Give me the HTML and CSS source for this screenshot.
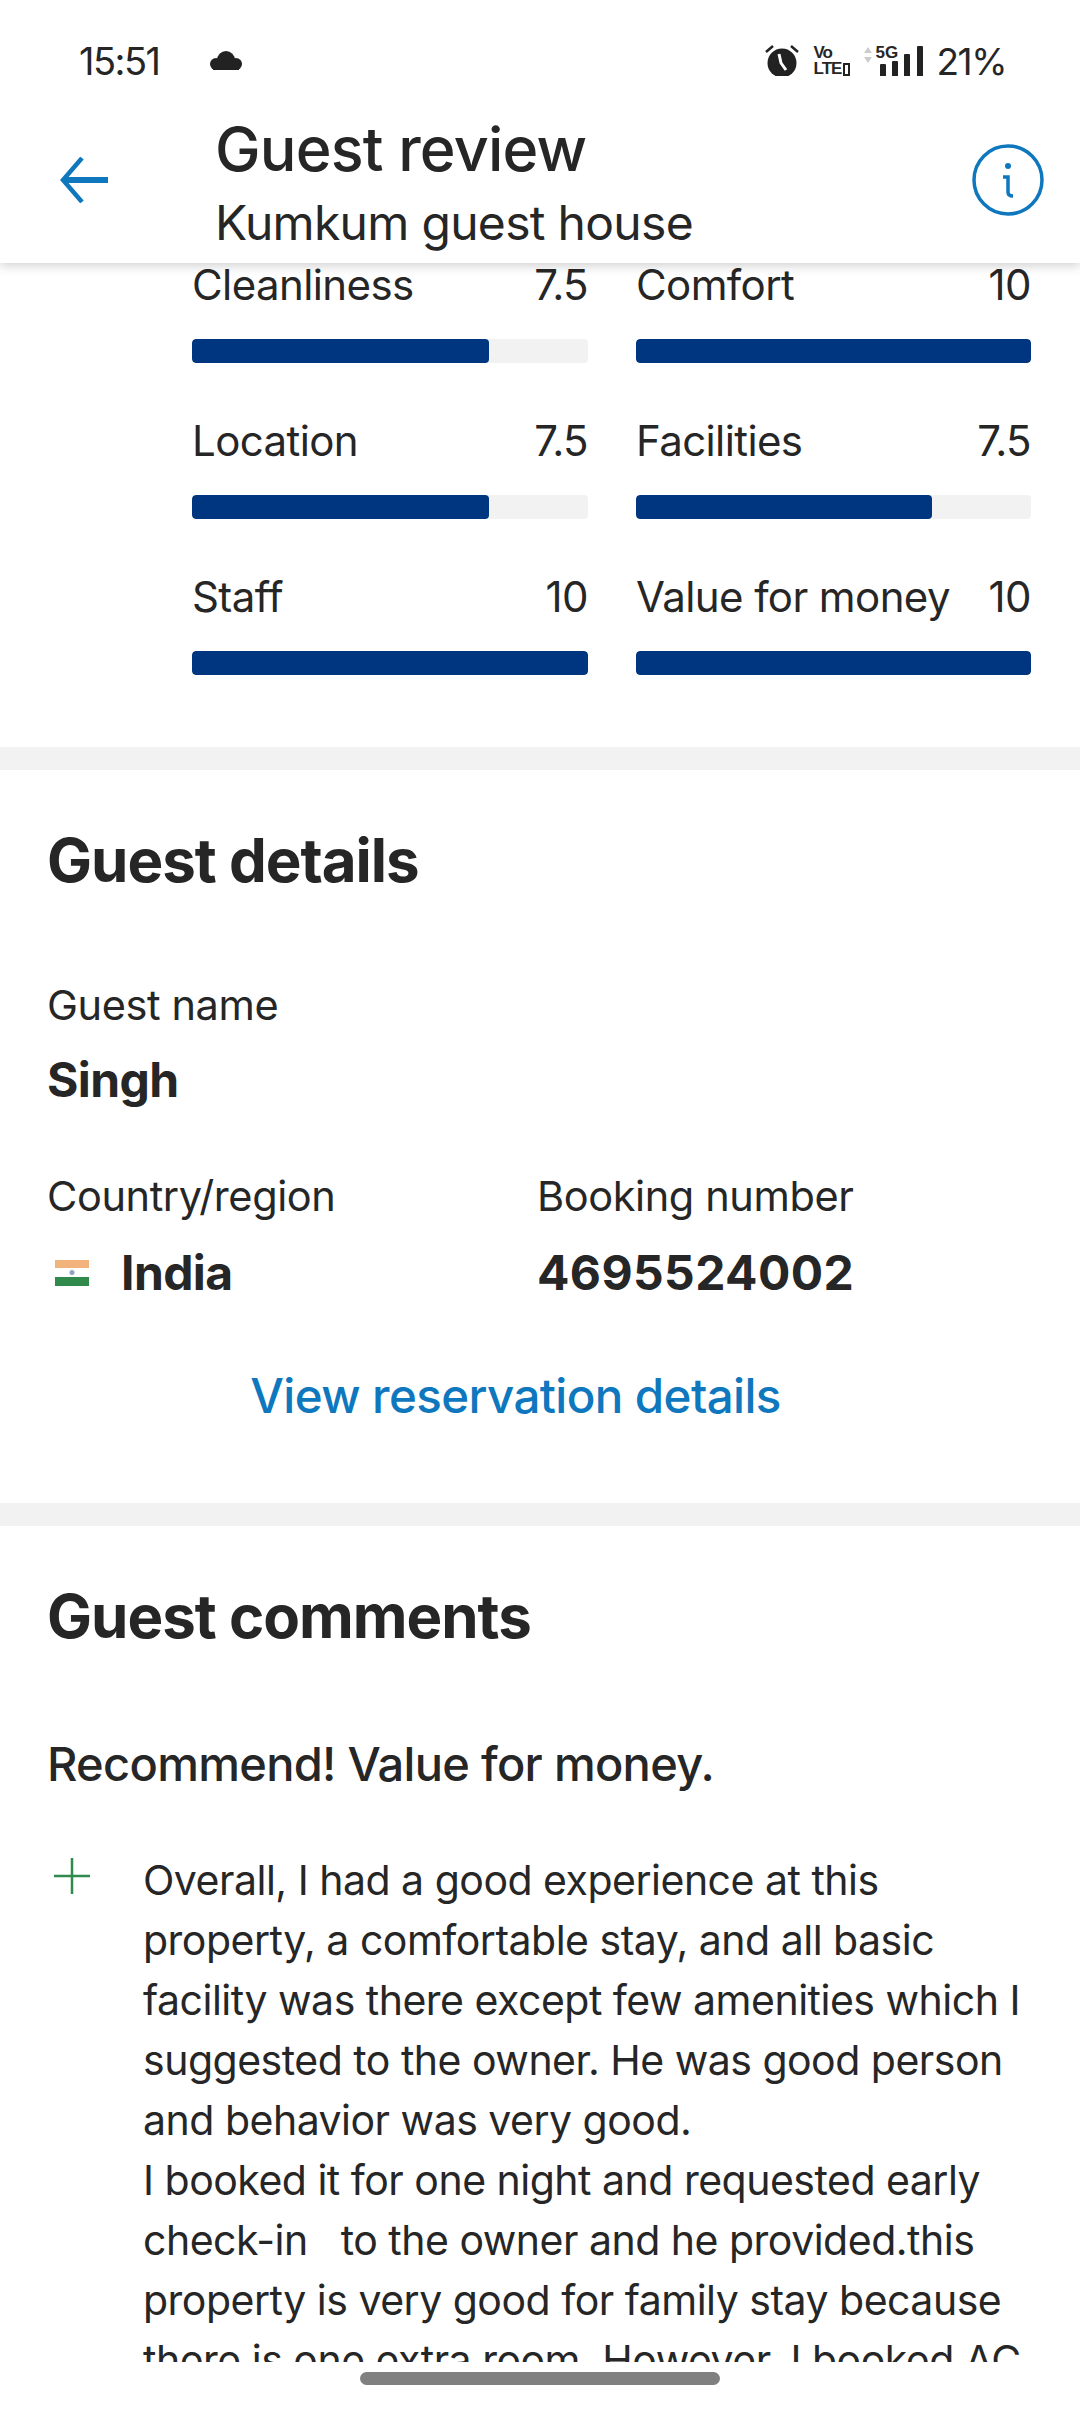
FILE: index.html
```html
<!doctype html>
<html lang="en">
    <head>
        <meta charset="UTF-8" />
        <meta name="viewport" content="width=device-width, initial-scale=1.0" />
        <title>Guest review</title>
        <link rel="stylesheet" href="styles.css">
    </head>
    <body>
        <div class="status-bar">
            <div class="status-left">
                <span class="time">15:51</span>
                <svg class="cloud" viewBox="0 0 34 20">
                    <circle cx="17" cy="9" r="9" fill="#222"/>
                    <circle cx="7" cy="13" r="6" fill="#222"/>
                    <circle cx="27" cy="13" r="6" fill="#222"/>
                    <rect x="4" y="13" width="26" height="6" fill="#222"/>
                </svg>
            </div>
            <div class="status-right">
                <svg class="alarm" viewBox="0 0 34 34">
                    <circle cx="17" cy="19" r="14.5" fill="#222"/>
                    <path d="M1 8l7-6M33 8l-7-6" stroke="#222" stroke-width="2.5" fill="none"/>
                    <path d="M14 10l2 9 5 7" stroke="#fff" stroke-width="3" fill="none"/>
                </svg>
                <span class="volte"><span>Vo</span><span class="volte-lte">LTE<i class="volte-box"></i></span></span>
                <svg class="arrows" viewBox="0 0 8 16"><path d="M4 0l4 6H0zM4 16l4-6H0z" fill="#ccc"/></svg>
                <div class="signal">
                    <span class="five-g">5G</span>
                    <svg viewBox="0 0 43 31"><rect x="0" y="18" width="6" height="13" rx="1"/><rect x="12" y="15" width="6" height="16" rx="1"/><rect x="24" y="8" width="6" height="23" rx="1"/><rect x="37" y="0" width="6" height="31" rx="1"/></svg>
                </div>
                <span class="battery">21%</span>
            </div>
        </div>

        <header class="app-header">
            <svg class="back" viewBox="0 0 48 46"><path d="M22 1L3 23l19 22" fill="none" stroke="#0f77bd" stroke-width="4.5"/><path d="M3 23h45" fill="none" stroke="#0f77bd" stroke-width="6"/></svg>
            <div class="titles">
                <h1>Guest review</h1>
                <p>Kumkum guest house</p>
            </div>
            <svg class="info" viewBox="0 0 72 72">
                <circle cx="36" cy="36" r="34" fill="none" stroke="#0f77bd" stroke-width="3.5"/>
                <circle cx="36" cy="22" r="3" fill="#0f77bd"/>
                <path d="M31 33h5v15c0 3 2 4 5 4" fill="none" stroke="#0f77bd" stroke-width="3.5"/>
            </svg>
        </header>

        <main class="content">
            <section class="scores">
                <div class="score"><div class="score-top"><span>Cleanliness</span><span>7.5</span></div><div class="track"><div class="fill" style="width: 75%"></div></div></div>
                <div class="score"><div class="score-top"><span>Comfort</span><span>10</span></div><div class="track"><div class="fill" style="width: 100%"></div></div></div>
                <div class="score"><div class="score-top"><span>Location</span><span>7.5</span></div><div class="track"><div class="fill" style="width: 75%"></div></div></div>
                <div class="score"><div class="score-top"><span>Facilities</span><span>7.5</span></div><div class="track"><div class="fill" style="width: 75%"></div></div></div>
                <div class="score"><div class="score-top"><span>Staff</span><span>10</span></div><div class="track"><div class="fill" style="width: 100%"></div></div></div>
                <div class="score"><div class="score-top"><span>Value for money</span><span>10</span></div><div class="track"><div class="fill" style="width: 100%"></div></div></div>
            </section>

            <section class="details">
                <h2>Guest details</h2>
                <div class="label">Guest name</div>
                <div class="value">Singh</div>
                <div class="details-row">
                    <div class="details-col">
                        <div class="label">Country/region</div>
                        <div class="value country">
                            <svg class="flag" viewBox="0 0 34 26">
                                <rect width="34" height="8" fill="#f2b27c"/>
                                <rect y="8" width="34" height="9" fill="#fff"/>
                                <rect y="17" width="34" height="9" fill="#2f8a4c"/>
                                <circle cx="17" cy="12.5" r="2.5" fill="#8fa3c4"/>
                            </svg>
                            <span>India</span>
                        </div>
                    </div>
                    <div class="details-col">
                        <div class="label">Booking number</div>
                        <div class="value booking">4695524002</div>
                    </div>
                </div>
                <a class="reservation" href="#">View reservation details</a>
            </section>

            <section class="comments">
                <h2>Guest comments</h2>
                <h3>Recommend! Value for money.</h3>
                <div class="comment">
                    <svg class="plus" viewBox="0 0 36 36"><path d="M18 0v36M0 18h36" stroke="#2f8a4c" stroke-width="2.5"/></svg>
                    <p>Overall, I had a good experience at this<br>property, a comfortable stay, and all basic<br>facility was there except few amenities which I<br>suggested to the owner. He was good person<br>and behavior was very good.<br>I booked it for one night and requested early<br>check-in &nbsp; to the owner and he provided.this<br>property is very good for family stay because<br>there is one extra room. However, I booked AC</p>
                </div>
            </section>
        </main>

        <div class="nav-bar"><div class="home-pill"></div></div>
    </body>
</html>
```

FILE: styles.css
```css
html,
body {
    height: 100%;
}
body {
    font-family: "Inter", "Liberation Sans", sans-serif;
    background: #fff;
    color: #262626;
    margin: 0;
    width: 1080px;
    height: 2411px;
    display: flex;
    flex-direction: column;
    overflow: hidden;
}

/* status bar */
.status-bar {
    height: 76px;
    padding: 45px 74px 0 79px;
    box-sizing: border-box;
    display: flex;
    justify-content: space-between;
    align-items: flex-start;
    flex: none;
}
.status-bar > div {
    display: flex;
    align-items: center;
    height: 32px;
}
.time {
    font-size: 38px;
    letter-spacing: -1.5px;
}
.battery {
    font-size: 37px;
    letter-spacing: -1.5px;
}
.cloud {
    width: 34px;
    height: 20px;
    margin-left: 49px;
}
.alarm {
    width: 34px;
    height: 34px;
}
.volte {
    display: flex;
    flex-direction: column;
    font-family: "Liberation Sans", sans-serif;
    font-size: 17px;
    font-weight: bold;
    line-height: 16px;
    letter-spacing: -1px;
    margin-left: 15px;
    width: 36px;
}
.volte-lte {
    display: flex;
    align-items: center;
    white-space: nowrap;
}
.volte-box {
    width: 6px;
    height: 9px;
    border: 2px solid #222;
    margin-left: 2px;
}
.arrows {
    width: 8px;
    height: 16px;
    margin: 0 0 12px 14px;
}
.signal {
    position: relative;
    margin-left: 8px;
    width: 43px;
    height: 31px;
}
.signal svg {
    width: 43px;
    height: 31px;
    fill: #222;
    display: block;
}
.five-g {
    position: absolute;
    left: -4px;
    top: 0;
    font-family: "Liberation Sans", sans-serif;
    font-size: 17px;
    font-weight: bold;
    line-height: 14px;
}
.battery {
    margin-left: 14px;
}

/* header */
.app-header {
    height: 187px;
    flex: none;
    display: flex;
    align-items: flex-start;
    background: #fff;
    box-shadow: 0 3px 10px rgba(0, 0, 0, 0.18);
    clip-path: inset(0 0 -20px 0);
    position: relative;
    z-index: 2;
}
.back {
    width: 48px;
    height: 46px;
    margin: 81px 0 0 60px;
}
.titles {
    margin-left: 107px;
    flex: 1;
}
.titles h1 {
    font-size: 61px;
    font-weight: 500;
    line-height: 68px;
    margin: 39px 0 0;
    letter-spacing: -0.8px;
}
.titles p {
    font-size: 48px;
    line-height: 56px;
    margin: 12px 0 0;
    letter-spacing: -0.7px;
}
.info {
    width: 72px;
    height: 72px;
    margin: 68px 36px 0 0;
}

/* scrolled content */
.content {
    flex: 1;
    min-height: 0;
    overflow: hidden;
    margin-top: -6px;
}
.scores {
    padding: 0 48px 72px 192px;
    display: grid;
    grid-template-columns: 396px 395px;
    column-gap: 48px;
    row-gap: 50px;
}
.score-top {
    display: flex;
    justify-content: space-between;
    font-size: 42px;
    line-height: 56px;
    letter-spacing: -0.6px;
    margin-bottom: 26px;
}
.track {
    height: 24px;
    background: #f2f2f2;
    border-radius: 4px;
    overflow: hidden;
}
.fill {
    height: 100%;
    background: #003580;
    border-radius: 4px;
}

/* sections */
.details,
.comments {
    border-top: 23px solid #f2f2f2;
    padding: 0 47px;
}
h2 {
    font-size: 60px;
    font-weight: 700;
    line-height: 68px;
    letter-spacing: -1px;
    margin: 56px 0 83px;
}
.label {
    font-size: 41.5px;
    line-height: 56px;
    letter-spacing: -0.4px;
}
.value {
    font-size: 48px;
    font-weight: 700;
    line-height: 60px;
    letter-spacing: -0.6px;
    margin-top: 17px;
}
.details-row {
    display: flex;
    margin-top: 58px;
}
.details-row .value {
    margin-top: 19px;
}
.details-col:first-child {
    width: 490px;
}
.country {
    display: flex;
    align-items: center;
}
.flag {
    width: 34px;
    height: 26px;
    margin: 0 32px 0 8px;
}
.booking {
    letter-spacing: 0.4px;
}
.reservation {
    display: block;
    text-align: center;
    color: #0f77bd;
    font-size: 47.5px;
    font-weight: 500;
    line-height: 60px;
    letter-spacing: -0.6px;
    text-decoration: none;
    margin: 63px 49px 77px 0;
}
.comments h2 {
    margin-bottom: 84px;
}
.comments h3 {
    font-size: 47px;
    font-weight: 500;
    line-height: 60px;
    letter-spacing: -0.7px;
    margin: 0 0 56px;
}
.comment {
    display: flex;
}
.plus {
    width: 36px;
    height: 36px;
    flex: none;
    margin: 8px 0 0 7px;
}
.comment p {
    font-size: 41px;
    line-height: 60px;
    letter-spacing: -0.5px;
    margin: 0 0 0 53px;
    white-space: nowrap;
}

.nav-bar {
    height: 49px;
    flex: none;
    background: #fff;
    position: relative;
    z-index: 2;
    display: flex;
    justify-content: center;
    padding-top: 10px;
    box-sizing: border-box;
}
.home-pill {
    width: 360px;
    height: 13px;
    border-radius: 7px;
    background: #808080;
}
```
